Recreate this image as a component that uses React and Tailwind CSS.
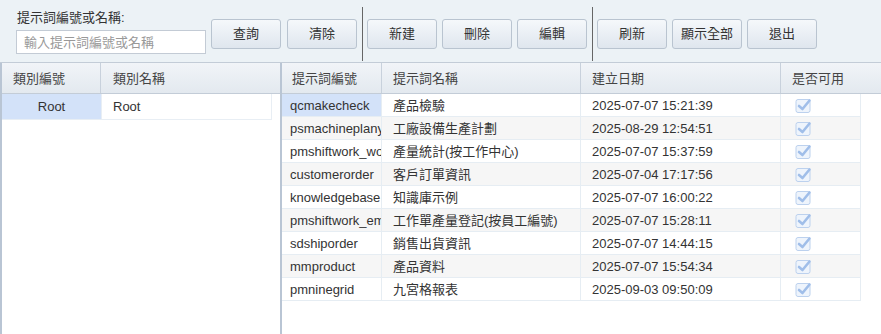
import React from "react";

const rows = [
  ["qcmakecheck", "產品檢驗", "2025-07-07 15:21:39"],
  ["psmachineplanyear", "工廠設備生產計劃", "2025-08-29 12:54:51"],
  ["pmshiftwork_workcenter", "產量統計(按工作中心)", "2025-07-07 15:37:59"],
  ["customerorder", "客戶訂單資訊", "2025-07-04 17:17:56"],
  ["knowledgebase", "知識庫示例", "2025-07-07 16:00:22"],
  ["pmshiftwork_employee", "工作單產量登記(按員工編號)", "2025-07-07 15:28:11"],
  ["sdshiporder", "銷售出貨資訊", "2025-07-07 14:44:15"],
  ["mmproduct", "產品資料", "2025-07-07 15:54:34"],
  ["pmninegrid", "九宮格報表", "2025-09-03 09:50:09"],
];

function Btn({ children }) {
  return (
    <button className="w-[70px] h-[30px] rounded-[3px] border border-[#b9c4d0] bg-gradient-to-b from-[#f5f8fb] to-[#dfe6ee] text-[13px] text-[#333]">
      {children}
    </button>
  );
}

function Check() {
  return (
    <svg width="17" height="17" viewBox="0 0 17 17">
      <rect x="1" y="2.5" width="14" height="13" rx="2" fill="#eef4fc" stroke="#bcd1ee" />
      <path d="M4 9 L7.5 12 L14.5 3.5" fill="none" stroke="#a0bee9" strokeWidth="2.6" strokeLinecap="round" strokeLinejoin="round" />
    </svg>
  );
}

export default function App() {
  return (
    <div className="w-[881px] h-[334px] overflow-hidden flex flex-col bg-white font-['Liberation_Sans','Noto_Sans_CJK_TC',sans-serif] text-[13px] text-[#333]">
      {/* Toolbar */}
      <div className="h-[63px] shrink-0 flex items-start bg-[#ecf2f6] border-b border-[#c3ccd7]">
        <div className="pl-4 pt-[10px] w-[211px]">
          <div className="leading-[16px] pl-[1px] text-[#333]">提示詞編號或名稱:</div>
          <input
            className="mt-[4px] w-[190px] h-[24px] border border-[#c3cbd5] bg-white px-[7px] text-[13px] outline-none placeholder:text-[#999]"
            placeholder="輸入提示詞編號或名稱"
          />
        </div>
        <div className="flex gap-[6px] pt-[19px]">
          <Btn>查詢</Btn>
          <Btn>清除</Btn>
        </div>
        <div className="w-px h-[54px] bg-[#666] mt-[7px] ml-[5px] mr-[4px]" />
        <div className="flex gap-[5px] pt-[19px]">
          <Btn>新建</Btn>
          <Btn>刪除</Btn>
          <Btn>編輯</Btn>
        </div>
        <div className="w-px h-[54px] bg-[#666] mt-[7px] ml-[5px] mr-[4px]" />
        <div className="flex gap-[5px] pt-[19px]">
          <Btn>刷新</Btn>
          <Btn>顯示全部</Btn>
          <Btn>退出</Btn>
        </div>
      </div>

      {/* Body */}
      <div className="flex flex-1 min-h-0">
        {/* Left panel */}
        <div className="w-[282px] shrink-0 border-l-2 border-r-2 border-[#b9c5d4] flex flex-col">
          <div className="h-[31px] flex bg-gradient-to-b from-[#f1f4f8] to-[#e3e9ef] border-b border-[#c3ccd7] text-[#444]">
            <div className="w-[99px] border-r border-[#c8d1dc] pl-[11px] pt-[1px] flex items-center">類別編號</div>
            <div className="flex-1 pl-[12px] pt-[1px] flex items-center">類別名稱</div>
          </div>
          <div className="flex h-[26px] w-[270px] border-b border-[#e8eef4]">
            <div className="w-[99px] bg-[#d3e2f9] pt-[1px] flex items-center justify-center">Root</div>
            <div className="flex-1 border-x border-[#e8eef4] pl-[11px] pt-[1px] flex items-center">Root</div>
          </div>
        </div>

        {/* Right panel */}
        <div className="flex-1 flex flex-col">
          <div className="h-[31px] flex bg-gradient-to-b from-[#f1f4f8] to-[#e3e9ef] border-b border-[#c3ccd7] text-[#444]">
            <div className="w-[100px] border-r border-[#c8d1dc] pl-[10px] pt-[1px] flex items-center">提示詞編號</div>
            <div className="w-[199px] border-r border-[#c8d1dc] pl-[11px] pt-[1px] flex items-center">提示詞名稱</div>
            <div className="w-[200px] border-r border-[#c8d1dc] pl-[11px] pt-[1px] flex items-center">建立日期</div>
            <div className="flex-1 pl-[11px] pt-[1px] flex items-center">是否可用</div>
          </div>
          <div className="w-[579px]">
            {rows.map((r, i) => (
              <div
                key={r[0]}
                className={`flex h-[23px] border-b border-[#e6edf3] ${i % 2 === 1 ? "bg-[#f6f6f6]" : "bg-white"}`}
              >
                <div
                  className={`w-[100px] overflow-hidden whitespace-nowrap pl-[8px] pt-[1px] flex items-center border-r border-[#e6edf3] ${i === 0 ? "bg-[#d3e2f9]" : ""}`}
                >
                  {r[0]}
                </div>
                <div className="w-[199px] pl-[11px] pt-[1px] flex items-center border-r border-[#e6edf3] whitespace-nowrap">{r[1]}</div>
                <div className="w-[200px] pl-[11px] pt-[1px] flex items-center border-r border-[#e6edf3]">{r[2]}</div>
                <div className="flex-1 pl-[14px] pt-[1px] flex items-center border-r border-[#e6edf3]">
                  <Check />
                </div>
              </div>
            ))}
          </div>
        </div>
      </div>
    </div>
  );
}
